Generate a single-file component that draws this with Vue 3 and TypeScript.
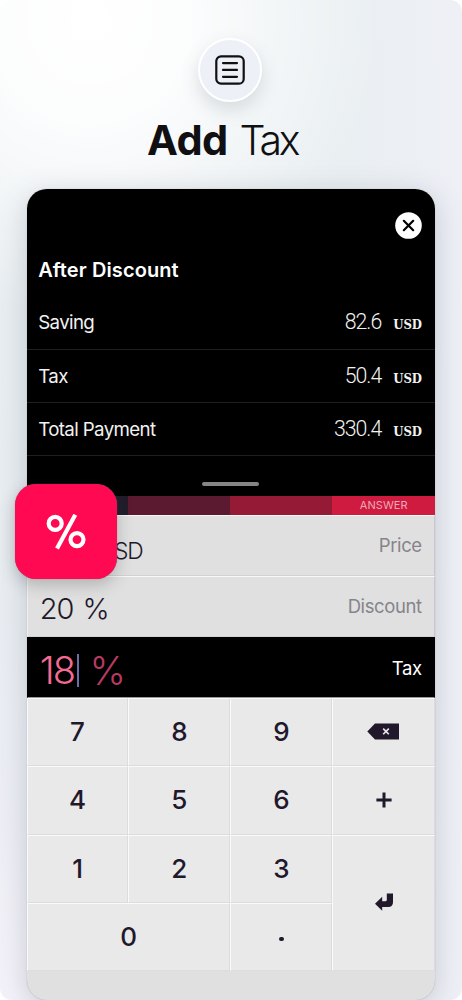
<script setup lang="ts">
interface Result { label: string; value: string }
interface Field { label: string; value: string; unit: string; kind: string }

const results: Result[] = [
  { label: 'Saving', value: '82.6' },
  { label: 'Tax', value: '50.4' },
  { label: 'Total Payment', value: '330.4' },
]
const fields: Field[] = [
  { label: 'Price', value: '413', unit: 'USD', kind: 'price' },
  { label: 'Discount', value: '20', unit: '%', kind: 'discount' },
]
const keys: string[] = ['7', '8', '9', 'back', '4', '5', '6', 'plus', '1', '2', '3', 'enter', '0', 'dot']
</script>

<template>
  <main class="page">
    <div class="sheet">
      <header class="head">
        <div class="circle">
          <svg width="30" height="30" viewBox="0 0 30 30" fill="none" stroke="#101012" stroke-linecap="round">
            <rect x="1.3" y="1.3" width="27.4" height="27.4" rx="4.8" stroke-width="2.2" />
            <path d="M8 8.1H22M8 14.9H22M8 21.8H22" stroke-width="2.2" />
          </svg>
        </div>
        <h1 class="title"><b>Add</b><span>Tax</span></h1>
      </header>

      <section class="phone">
        <div class="panel">
          <div class="top">
            <button class="close" aria-label="Close">
              <svg width="27" height="27" viewBox="0 0 27 27">
                <circle cx="13.5" cy="13.5" r="13.3" fill="#fff" />
                <path d="M8.8 8.8L18.2 18.2M18.2 8.8L8.8 18.2" stroke="#000" stroke-width="2.2" stroke-linecap="round" />
              </svg>
            </button>
          </div>
          <h2>After Discount</h2>
          <div v-for="r in results" :key="r.label" class="result">
            <span class="label">{{ r.label }}</span>
            <span class="num">{{ r.value }}</span>
            <span class="cur">USD</span>
          </div>
          <div class="grip"><i></i></div>
        </div>

        <div class="strip">
          <span></span><span></span><span></span><span>ANSWER</span>
        </div>

        <div v-for="f in fields" :key="f.label" class="field" :class="f.kind">
          <span class="val"><span class="amt">{{ f.value }}</span><span class="unit">{{ f.unit }}</span></span>
          <span class="name">{{ f.label }}</span>
        </div>
        <div class="field tax">
          <span class="val"><span class="amt">18</span><i class="caret"></i><span class="unit">%</span></span>
          <span class="name">Tax</span>
        </div>

        <div class="pad">
          <button v-for="k in keys" :key="k" class="key" :class="'k-' + k">
            <svg v-if="k === 'back'" width="33" height="17" viewBox="0 0 33 17">
              <path d="M8 .4H32V16.4H8L.3 8.4Z" fill="#21182b" />
              <path d="M16.2 5.6L21.8 11.2M21.8 5.6L16.2 11.2" stroke="#e9e9e9" stroke-width="1.6" />
            </svg>
            <svg v-else-if="k === 'plus'" width="16" height="16" viewBox="0 0 16 16">
              <path d="M.4 8H15.6M8 .4V15.6" stroke="#21182b" stroke-width="3" />
            </svg>
            <svg v-else-if="k === 'enter'" width="18" height="18" viewBox="0 0 18 18">
              <path d="M11.8 .5H18V9.2Q18 14 13.2 14H7.2V17.8L0 10.8L7.2 3.8V8.3H10.3Q11.8 8.3 11.8 6.8Z" fill="#21182b" />
            </svg>
            <i v-else-if="k === 'dot'" class="dot"></i>
            <template v-else>{{ k }}</template>
          </button>
        </div>
      </section>

      <div class="badge">
        <svg width="40" height="36" viewBox="0 0 40 36" fill="none" stroke="#fff" stroke-width="4.2">
          <circle cx="9.2" cy="9.4" r="6.5" />
          <circle cx="31" cy="25.6" r="6.5" />
          <path d="M29.3 .8L11 34.6" />
        </svg>
      </div>
    </div>
  </main>
</template>

<style>
body { margin: 0; background: #fff; }
</style>

<style scoped>
* { box-sizing: border-box; }
.page { width: 462px; height: 1000px; background: #fff; font-family: Inter, "Liberation Sans", sans-serif; }
.sheet {
  position: relative; width: 462px; height: 1000px; overflow: hidden; border-radius: 12px;
  background:
    radial-gradient(ellipse 290px 300px at 90px 20px, #fff 0, rgba(255, 255, 255, .85) 35%, rgba(255, 255, 255, 0) 100%),
    linear-gradient(90deg, rgba(237, 240, 246, 0) 72%, #eef0f6 100%),
    linear-gradient(180deg, #e9eff1 0, #e8edf1 55%, #eceef4 78%, #f4f2f9 100%);
}
.head { height: 189.4px; display: flex; flex-direction: column; align-items: center; padding-top: 37.5px; }
.circle {
  width: 64px; height: 64px; border-radius: 50%; border: 2.5px solid #fff; background: #edf0f6;
  display: flex; align-items: center; justify-content: center; box-shadow: 0 8px 18px rgba(90, 105, 115, .2);
  margin-right: 2px; flex: none;
}
.title {
  margin: 13px 0 0; width: 170px; padding-left: 1px; display: flex; gap: 12px;
  font-size: 41.5px; line-height: 50px; font-weight: 300; color: #101012; white-space: nowrap;
}
.title b { font-weight: 700; letter-spacing: -.6px; }
.title span { letter-spacing: -3.2px; font-size: 41px; }
.phone {
  margin-left: 26.7px; width: 408.6px; height: 810.6px; border-radius: 20px; overflow: hidden; background: #e0e0e0;
  box-shadow: 0 0 1px rgba(90, 100, 105, .5), 0 6px 28px rgba(70, 85, 105, .25);
}
.panel { background: #000; height: 306.6px; color: #f2f2f2; }
.top { height: 60.8px; display: flex; justify-content: flex-end; padding: 23px 13px 0 0; }
.close { padding: 0; border: 0; background: none; width: 27px; height: 27px; }
.close svg { display: block; }
h2 { margin: 0; padding-left: 11.5px; height: 46.2px; line-height: 40px; font-size: 20px; font-weight: 600; letter-spacing: .1px; color: #fff; }
.result { height: 53.2px; display: flex; align-items: baseline; padding: 0 13.5px 0 11.5px; border-bottom: 1px solid #1f1f1f; line-height: 51.6px; }
.label { font-size: 18.7px; letter-spacing: -.62px; flex: 1; }
.num { font-family: Roboto, sans-serif; font-weight: 300; font-size: 21.3px; letter-spacing: -1px; margin-right: 12px; }
.cur { font-family: "DejaVu Serif Condensed", "DejaVu Serif", serif; font-weight: 700; font-size: 13px; letter-spacing: -.1px; }
.grip { display: flex; justify-content: center; padding-top: 26px; }
.grip i { width: 57px; height: 4px; border-radius: 2px; background: #858585; }
.strip { height: 19.2px; display: grid; grid-template-columns: 101.5px 102px 102px 1fr; }
.strip span { font-size: 11px; line-height: 19px; text-align: center; color: #eea9b6; letter-spacing: .1px; }
.strip span:nth-child(1) { background: #211b2a; }
.strip span:nth-child(2) { background: #5b1a2f; }
.strip span:nth-child(3) { background: #951a36; }
.strip span:nth-child(4) { background: #cf1b40; }
.field {
  height: 60.8px; background: #e0e0e0; border-top: 1px solid #f8f8f8; border-left: 1px solid #eee; border-bottom: 1px solid #d2d2d2;
  border-right: 1px solid #c8c8cb; display: flex; justify-content: space-between; padding: 0 12.5px 0 12px; color: #21182b;
}
.name { font-size: 18.5px; letter-spacing: -.38px; line-height: 59px; color: #86848b; }
.val { display: flex; align-items: center; font-weight: 300; white-space: nowrap; }
.price .val { font-size: 22.8px; letter-spacing: -1.3px; padding: 9px 0 0 18px; }
.price .unit { margin-left: 8px; }
.discount .val { font-size: 29px; padding-top: 3.5px; letter-spacing: -.9px; }
.discount .unit { margin-left: 9px; font-size: 29px; letter-spacing: 0; }
.tax { height: 61.3px; background: #000; border-color: #000; border-bottom-color: #999; }
.tax .name { color: #fff; line-height: 60px; }
.tax .val { font-size: 38px; font-weight: 300; color: #f36b92; letter-spacing: -2px; padding-top: 6px; }
.tax .unit { color: #b93a60; margin-left: 10.5px; letter-spacing: 0; font-size: 39px; }
.tax .caret { width: 2px; height: 33px; background: #6c6ca7; margin-left: 3px; }
.pad { display: grid; grid-template-columns: 101.7px 102px 102px 1fr; grid-template-rows: 68.4px 68.4px 68.4px 67.8px; }
.key {
  font-family: Inter, sans-serif; font-weight: 500; font-size: 26px; line-height: 1; color: #21182b; background: #e9e9e9;
  border: 0; border-top: 1px solid #fafafa; border-left: 1px solid #fafafa; border-bottom: 1px solid #dcdcdc; border-right: 1px solid #dcdcdc;
  margin: 0; padding: 0 0 1px; display: flex; align-items: center; justify-content: center;
}
.k-enter { grid-row: span 2; }
.k-0 { grid-column: span 2; }
.dot { width: 4.6px; height: 4.6px; border-radius: 50%; background: #21182b; margin-top: 5px; }
.badge {
  position: absolute; left: 15px; top: 484px; width: 102px; height: 95px; border-radius: 21px; background: #ff0a52;
  display: flex; align-items: center; justify-content: center; box-shadow: 0 6px 16px rgba(60, 60, 70, .28), 0 0 1px #777;
}
</style>
